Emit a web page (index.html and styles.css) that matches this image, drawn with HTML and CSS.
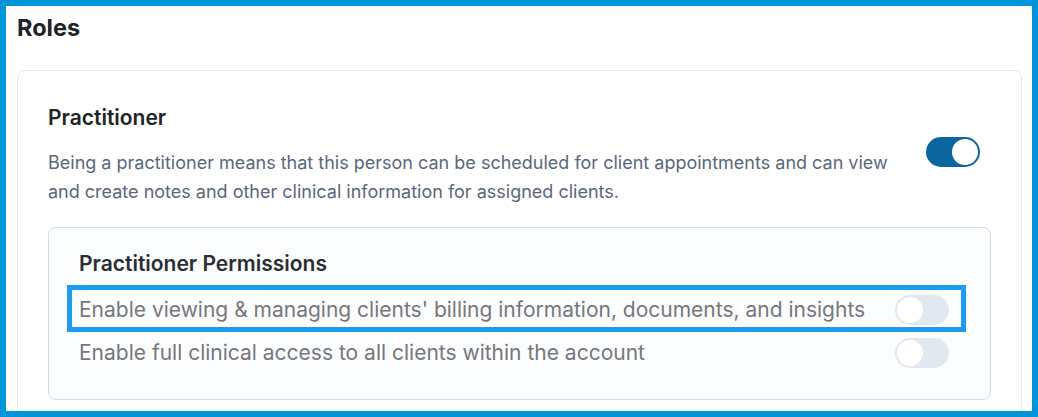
FILE: index.html
```html
<!DOCTYPE html>
<html lang="en">
<head>
<meta charset="utf-8">
<title>Roles</title>
<link rel="stylesheet" href="styles.css">
</head>
<body>
<div class="frame">
  <h1 class="title">Roles</h1>
  <section class="card">
    <h2 class="role-name">Practitioner</h2>
    <div class="role-row">
      <p class="role-desc">Being a practitioner means that this person can be scheduled for client appointments and can view and create notes and other clinical information for assigned clients.</p>
      <span class="toggle toggle-on"><span class="knob"></span></span>
    </div>
    <div class="perm-card">
      <h3 class="perm-title">Practitioner Permissions</h3>
      <div class="perm-list">
        <div class="perm-row highlighted">
          <span class="perm-label">Enable viewing &amp; managing clients' billing information, documents, and insights</span>
          <span class="toggle"><span class="knob"></span></span>
        </div>
        <div class="perm-row">
          <span class="perm-label">Enable full clinical access to all clients within the account</span>
          <span class="toggle"><span class="knob"></span></span>
        </div>
      </div>
    </div>
  </section>
</div>
</body>
</html>
```
FILE: styles.css
```css
* { box-sizing: border-box; }
html, body { margin: 0; padding: 0; }
body {
  font-family: Inter, "Noto Sans", sans-serif;
  background: #ffffff;
}
.frame {
  width: 1038px;
  height: 417px;
  border: 6px solid #0095da;
  overflow: hidden;
  padding: 8px 10px 0 11px;
  background: #ffffff;
}
.title {
  margin: 0;
  font-size: 23.5px;
  line-height: 28px;
  font-weight: 700;
  color: #202327;
}
.card {
  margin-top: 28px;
  border: 1px solid #e4e7eb;
  border-radius: 8px;
  padding: 33px 41px 40px 30px;
}
.role-name {
  margin: 0;
  font-size: 21px;
  line-height: 28px;
  font-weight: 600;
  color: #202327;
}
.role-row {
  display: flex;
  align-items: flex-start;
  gap: 28px;
  margin-top: 16px;
}
.role-desc {
  flex: 1;
  margin: 0;
  font-size: 18px;
  line-height: 29px;
  color: #5a677b;
}
.toggle {
  flex: none;
  width: 54px;
  height: 30px;
  border-radius: 15px;
  background: #e2e8f0;
  padding: 2px;
  display: flex;
  justify-content: flex-start;
  align-items: center;
}
.toggle-on {
  background: #0b65a0;
  justify-content: flex-end;
  margin-top: -11px;
}
.knob {
  width: 26px;
  height: 26px;
  border-radius: 50%;
  background: #ffffff;
}
.perm-card {
  margin-top: 21px;
  margin-right: -11px;
  border: 1px solid #d3dae3;
  border-radius: 8px;
  background: #fcfdfe;
  padding: 22px 41px 31px 30px;
}
.perm-title {
  margin: 0;
  font-size: 21px;
  line-height: 28px;
  font-weight: 600;
  color: #2a2d33;
}
.perm-list {
  display: flex;
  flex-direction: column;
  gap: 13px;
  margin-top: 17px;
}
.perm-row {
  position: relative;
  display: flex;
  align-items: center;
  justify-content: space-between;
  gap: 20px;
  height: 30px;
}
.perm-label {
  font-size: 21px;
  line-height: 30px;
  color: #76777b;
}
.highlighted::after {
  content: "";
  position: absolute;
  top: -10px;
  bottom: -7px;
  left: -12px;
  right: -17px;
  border: 5px solid #1d9bf0;
  pointer-events: none;
}
```
